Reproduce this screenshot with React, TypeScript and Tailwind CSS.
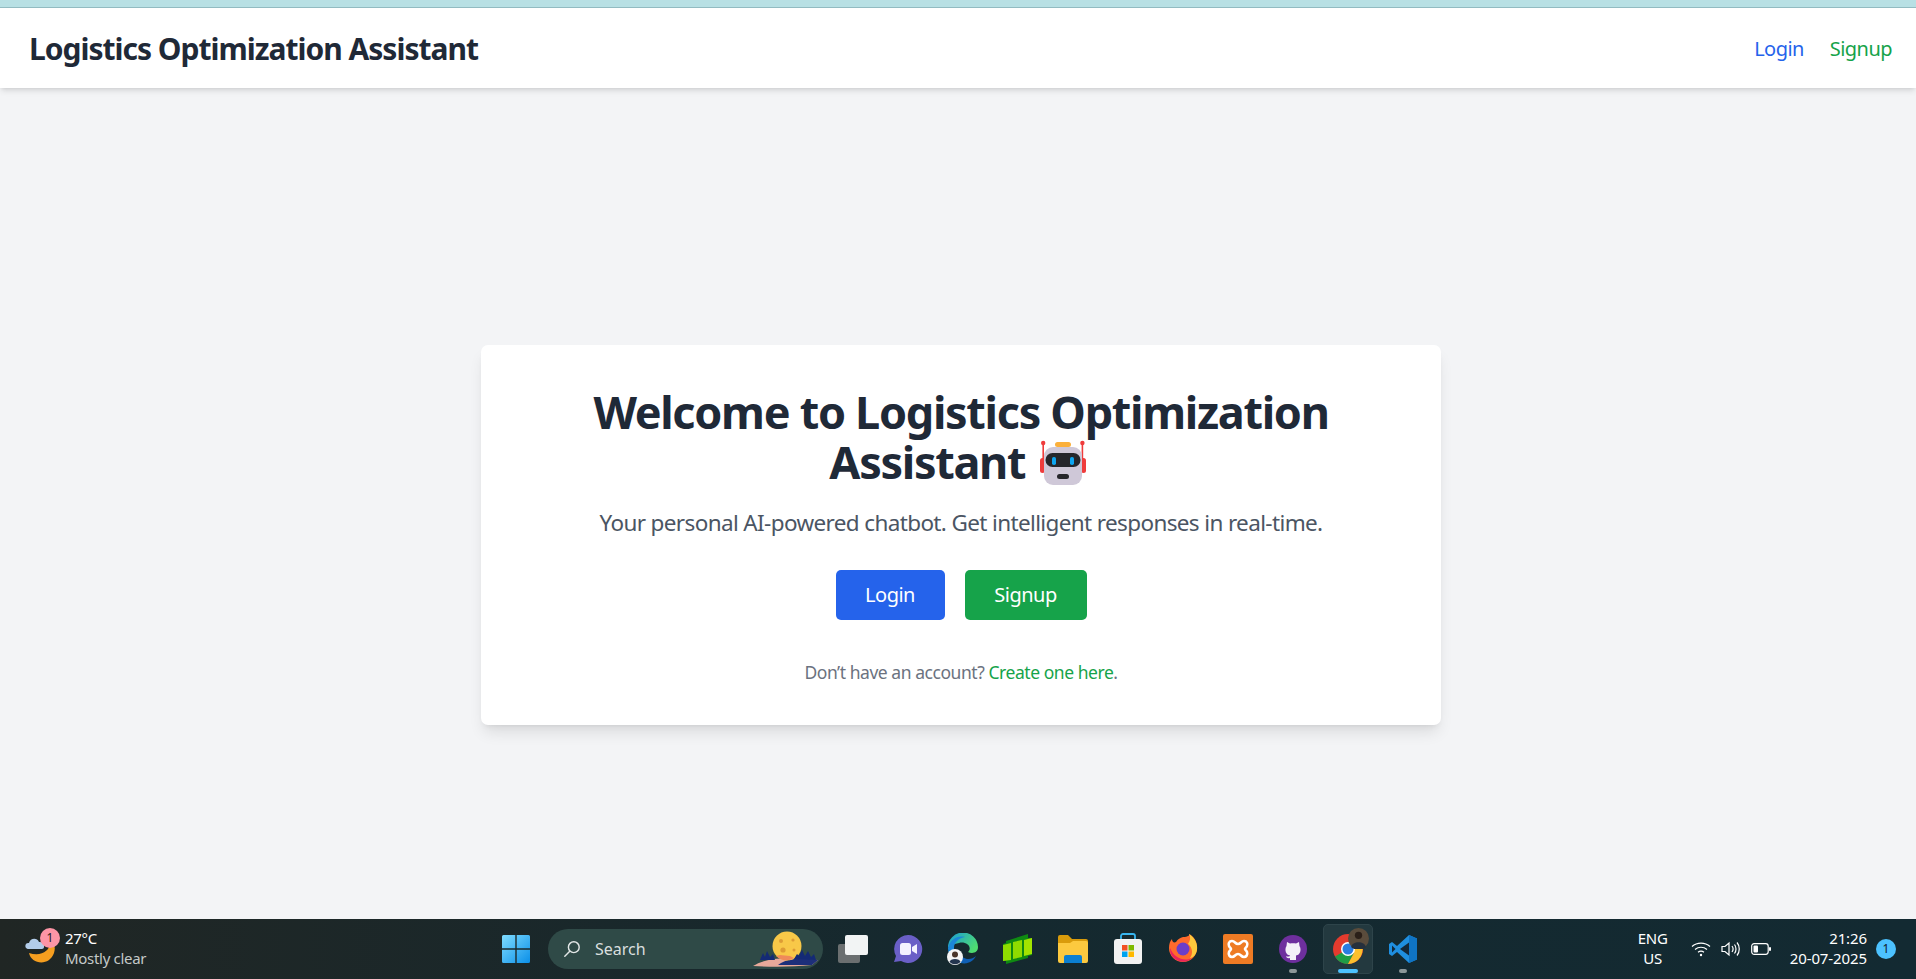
import React from "react";

const FONT = "font-['Noto_Sans','Open_Sans',sans-serif]";

function RobotEmoji() {
  return (
    <svg viewBox="0 0 52 48" className="inline-block w-[52px] h-[48px] align-[2.5px] -my-[10px] mr-[5px]">
      <rect x="19" y="3" width="16" height="5" rx="2.5" fill="#fbb03b" />
      <rect x="6.4" y="4" width="1.6" height="18" fill="#ef3c3c" />
      <rect x="45.6" y="4" width="1.6" height="18" fill="#ef3c3c" />
      <circle cx="7.2" cy="4" r="2.2" fill="#ef3c3c" />
      <circle cx="46.4" cy="4" r="2.2" fill="#ef3c3c" />
      <rect x="4" y="19" width="5" height="15" rx="2.5" fill="#ef3c3c" />
      <rect x="45" y="19" width="5" height="15" rx="2.5" fill="#ef3c3c" />
      <rect x="8" y="8" width="38" height="38" rx="9" fill="#cfc8d8" />
      <rect x="9.5" y="14" width="35" height="14" rx="7" fill="#26262b" />
      <rect x="16" y="18" width="4" height="8" rx="1.8" fill="#0ea5f0" />
      <rect x="34" y="18" width="4" height="8" rx="1.8" fill="#0ea5f0" />
      <rect x="21" y="35" width="12" height="5" rx="2.5" fill="#26262b" />
    </svg>
  );
}

function WeatherIcon() {
  return (
    <svg viewBox="0 0 34 34" className="w-[34px] h-[34px]">
      <path d="M26 9 C27 19 17 25 5 21 C7 32 25 35 30 21 C32 15 30 11 26 9 Z" fill="#f59e1f" />
      <path d="M5 17 C2 17 1 15 1.500 13 C2 11 4 11 5 11 C6 6 13 5 15 10 C18 10 21 12 20 15 C20 16 19 17 18 17 Z" fill="#b3cdea" />
    </svg>
  );
}

function WindowsIcon() {
  return (
    <svg viewBox="0 0 30 30" className="w-[30px] h-[30px]">
      <defs>
        <linearGradient id="win" x1="0" y1="0" x2="1" y2="1">
          <stop offset="0" stopColor="#7fdcff" />
          <stop offset="1" stopColor="#0a8fe8" />
        </linearGradient>
      </defs>
      <path d="M1 2.500 A1.500 1.500 0 0 1 2.500 1 H14.300 V14.300 H1 Z M15.700 1 H27.500 A1.500 1.500 0 0 1 29 2.500 V14.300 H15.700 Z M1 15.700 H14.300 V29 H2.500 A1.500 1.500 0 0 1 1 27.500 Z M15.700 15.700 H29 V27.500 A1.500 1.500 0 0 1 27.500 29 H15.700 Z" fill="url(#win)" />
    </svg>
  );
}

function SearchArt() {
  return (
    <svg viewBox="0 0 66 40" className="w-[66px] h-[40px] absolute right-[5px] top-0">
      <path d="M1 37 C12 30 30 28 46 30 L66 31 L60 36 C40 38 20 38 1 37 Z" fill="#e8a99a" />
      <path d="M26 36 C34 29 50 28 66 31 L60 36 Z" fill="#1d2f7a" />
      <path d="M8 31 L11 24 L13 28 L15 22 L18 28 L21 25 L23 31 Z" fill="#142a75" />
      <circle cx="35" cy="17" r="14.500" fill="#f8c848" />
      <path d="M42 30 L45 25 L47 27 L50 21 L53 27 L56 22 L59 28 L62 25 L64 31 Z" fill="#142a75" />
      <circle cx="29" cy="12" r="2" fill="#dd9c35" />
      <circle cx="41" cy="11" r="1.600" fill="#dd9c35" />
      <circle cx="31" cy="21" r="2.600" fill="#dd9c35" />
      <circle cx="42" cy="21" r="1.500" fill="#dd9c35" />
      <path d="M24 27 A14.500 14.500 0 0 0 42 29 L38 27 L28 26 Z" fill="#ef8a5a" />
    </svg>
  );
}

function TaskViewIcon() {
  return (
    <svg viewBox="0 0 30 28" className="w-[30px] h-[28px]">
      <rect x="0" y="9" width="22" height="19" rx="2" fill="#6b6f70" />
      <rect x="7" y="0" width="23" height="20" rx="2" fill="#f2f4f4" />
    </svg>
  );
}

function MeetIcon() {
  return (
    <svg viewBox="0 0 30 30" className="w-[30px] h-[30px]">
      <path d="M15 1 A14 14 0 1 1 8 27 L1 28 L3 22 A14 14 0 0 1 15 1 Z" fill="#6a5fc7" />
      <rect x="7" y="9" width="11" height="12" rx="2.500" fill="#f4f2ff" />
      <path d="M19 13 L24 10 V20 L19 17 Z" fill="#f4f2ff" />
    </svg>
  );
}

function EdgeIcon() {
  return (
    <svg viewBox="0 0 32 32" className="w-[32px] h-[32px]">
      <defs>
        <linearGradient id="edge" x1="0" y1="0" x2="1" y2="0.600">
          <stop offset="0" stopColor="#1a9ad8" />
          <stop offset="1" stopColor="#4fdc70" />
        </linearGradient>
      </defs>
      <path d="M1 15 A15 15 0 0 1 31 14 C31 20 25 21 21 19 C26 14 19 8 12 10 C6 11 2 13 1 15 Z" fill="url(#edge)" />
      <path d="M1 15 C3 7 10 2 18 4 C12 5 7 9 7 15 C7 22 12 30 19 30 A15 15 0 0 1 1 15 Z" fill="#1b87d8" />
      <path d="M13 19 C14 27 24 28 29 23 C26 29 20 31 16 30 C11 29 9 24 13 19 Z" fill="#0f5fb5" />
      <circle cx="8" cy="24" r="8" fill="#f4f4f4" />
      <circle cx="8" cy="21.500" r="3" fill="#4a3428" />
      <path d="M2.500 29 C3 25 13 25 13.500 29 A8 8 0 0 1 2.500 29 Z" fill="#23354f" />
    </svg>
  );
}

function GreenIcon() {
  return (
    <svg viewBox="0 0 32 32" className="w-[32px] h-[32px]">
      <path d="M4 8 L26 1 V5 L30 5 V22 L26 23 V25 L4 31 V28 L1 28 V11 L4 10 Z" fill="#0f8a12" />
      <path d="M1 12 L9 10 V27 L1 28 Z" fill="#8fdc00" />
      <path d="M11 9 L20 7 V24 L11 26 Z" fill="#8fdc00" />
      <path d="M22 7 L30 5 V21 L22 23 Z" fill="#a2e400" />
    </svg>
  );
}

function FolderIcon() {
  return (
    <svg viewBox="0 0 32 30" className="w-[32px] h-[30px]">
      <path d="M1 3 A2 2 0 0 1 3 1 H11 L15 5 H29 A2 2 0 0 1 31 7 V12 H1 Z" fill="#d99b0b" />
      <path d="M1 9 H13 L16 7 H29 A2 2 0 0 1 31 9 V27 A2 2 0 0 1 29 29 H3 A2 2 0 0 1 1 27 Z" fill="#fcc93f" />
      <path d="M7 29 V23 A2 2 0 0 1 9 21 H23 A2 2 0 0 1 25 23 V29 Z" fill="#0b7fd1" />
    </svg>
  );
}

function StoreIcon() {
  return (
    <svg viewBox="0 0 30 32" className="w-[30px] h-[32px]">
      <path d="M8 7 V3 A2 2 0 0 1 10 1 H20 A2 2 0 0 1 22 3 V7" fill="none" stroke="#38b6f0" strokeWidth="1.800" />
      <rect x="1" y="6" width="28" height="25" rx="3" fill="#f2f2f2" />
      <rect x="9" y="12" width="5.500" height="5.500" fill="#f25022" />
      <rect x="15.500" y="12" width="5.500" height="5.500" fill="#7fba00" />
      <rect x="9" y="18.500" width="5.500" height="5.500" fill="#00a4ef" />
      <rect x="15.500" y="18.500" width="5.500" height="5.500" fill="#ffb900" />
    </svg>
  );
}

function FirefoxIcon() {
  return (
    <svg viewBox="0 0 30 30" className="w-[30px] h-[30px]">
      <path d="M15 3 C20 3 22 1 21 0 C25 2 29 6 29 14 A14 14 0 1 1 1 14 C1 10 2 7 4 5 C4 8 6 9 8 8 C10 5 12 4 15 3 Z" fill="#ff6a2b" />
      <path d="M21 0 C27 4 30 10 29 16 C28 22 24 24 22 24 C25 20 25 14 20 10 C22 7 23 4 21 0 Z" fill="#ffc93c" />
      <path d="M2 14 A13 13 0 0 0 24 24 C16 28 6 24 2 14 Z" fill="#e9245c" />
      <circle cx="15" cy="15" r="6.500" fill="#6b3ec9" />
    </svg>
  );
}

function XamppIcon() {
  return (
    <svg viewBox="0 0 30 30" className="w-[30px] h-[30px]">
      <rect width="30" height="30" rx="2" fill="#ee7b24" />
      <path d="M9 7 C6 7 5 10 6 12 C7 14 8 14 8 15 C8 16 7 16 6 18 C5 21 7 23 9 23 C12 23 12 20 15 20 C18 20 18 23 21 23 C23 23 25 21 24 18 C23 16 22 16 22 15 C22 14 23 14 24 12 C25 10 24 7 21 7 C18 7 18 10 15 10 C12 10 12 7 9 7 Z" fill="none" stroke="#fff" strokeWidth="2.600" />
    </svg>
  );
}

function GithubIcon() {
  return (
    <svg viewBox="0 0 28 28" className="w-[28px] h-[28px]">
      <circle cx="14" cy="14" r="14" fill="#6e2f9e" />
      <path d="M8 7 L11 8.500 C13 8 15 8 17 8.500 L20 7 L20.500 11 C22 13 22 17 20 19 C19 20 18 20.300 17 20.500 V25 H11 V23 C9 23.500 7.500 23 7 21 C8 21.500 9 22 11 21 V20.500 C10 20.300 9 20 8 19 C6 17 6 13 7.500 11 Z" fill="#f4f0f8" />
    </svg>
  );
}

function ChromeIcon() {
  return (
    <svg viewBox="0 0 32 32" className="w-[32px] h-[32px]">
      <circle cx="16" cy="16" r="15" fill="#e33b2e" />
      <path d="M16 16 L3 23.500 A15 15 0 0 0 16 31 L22 20 Z" fill="#1f9d45" />
      <path d="M16 9 H29 A15 15 0 0 1 16 31 L22 20 Z" fill="#fbc02d" />
      <circle cx="16" cy="16" r="7" fill="#fff" />
      <circle cx="16" cy="16" r="5.500" fill="#2a7de1" />
    </svg>
  );
}

function AvatarBadge() {
  return (
    <svg viewBox="0 0 20 20" className="absolute top-[3px] right-[3px] w-[21px] h-[21px]">
      <circle cx="10" cy="10" r="10" fill="#5a4c3c" />
      <circle cx="10" cy="7" r="3.500" fill="#2a1f18" />
      <path d="M3 18 C4 12 16 12 17 18 A10 10 0 0 1 3 18 Z" fill="#26303c" />
    </svg>
  );
}

function VscodeIcon() {
  return (
    <svg viewBox="0 0 30 30" className="w-[30px] h-[30px]">
      <path d="M21 1 L29 4.500 V25.500 L21 29 L9 18 L4 22 L1 20 V10 L4 8 L9 12 Z" fill="#1f8fe0" />
      <path d="M21 8.500 L12 15 L21 21.500 Z" fill="#14293a" />
      <path d="M4 11.500 L7.500 15 L4 18.500 Z" fill="#14293a" />
      <path d="M21 1 L29 4.500 V25.500 L21 29 Z" fill="#0f74c4" />
    </svg>
  );
}

function TrayIcons() {
  return (
    <div className="flex items-center gap-[10px]">
      <svg viewBox="0 0 20 16" className="w-[20px] h-[16px]" fill="none" stroke="#fff" strokeWidth="1.200">
        <path d="M1 5.500 C6 1 14 1 19 5.500" />
        <path d="M4 8.500 C7.500 5.500 12.500 5.500 16 8.500" />
        <path d="M7 11.200 C9 9.800 11 9.800 13 11.200" />
        <circle cx="10" cy="14" r="1.200" fill="#fff" stroke="none" />
      </svg>
      <svg viewBox="0 0 20 16" className="w-[20px] h-[16px]" fill="none" stroke="#fff" strokeWidth="1.200">
        <path d="M1 5.500 H4 L8 2 V14 L4 10.500 H1 Z" />
        <path d="M11 5 C12.500 7 12.500 9 11 11" />
        <path d="M13.500 3.500 C15.500 6 15.500 10 13.500 12.500" />
        <path d="M16 1.500 C19 5 19 11 16 14.500" />
      </svg>
      <svg viewBox="0 0 20 14" className="w-[20px] h-[14px]" fill="none" stroke="#fff" strokeWidth="1.200">
        <rect x="0.700" y="1.700" width="16.500" height="10.600" rx="2.500" />
        <rect x="2.500" y="3.500" width="4.500" height="7" rx="1" fill="#fff" stroke="none" />
        <rect x="18" y="5" width="2" height="4" rx="1" fill="#fff" stroke="none" />
      </svg>
    </div>
  );
}

function TaskItem({ active, dot, children }: { active?: boolean; dot?: boolean; children: React.ReactNode }) {
  return (
    <div
      className={`relative w-[50px] h-[50px] flex items-center justify-center rounded-[5px] ${
        active ? "bg-[#23393f] border border-[#2e444a]" : ""
      }`}
    >
      {children}
      {dot && <span className="absolute bottom-[1px] left-[21px] w-[8px] h-[4px] rounded-full bg-[#8c9698]" />}
      {active && <span className="absolute bottom-0 left-[14px] w-[20px] h-[4px] rounded-full bg-[#4cc2ff]" />}
    </div>
  );
}

export default function App() {
  return (
    <div className={`w-[1916px] h-[979px] overflow-hidden flex flex-col bg-[#f3f4f6] ${FONT}`}>
      <div className="h-[8px] shrink-0 bg-[#b8e0e4] border-b border-[#93bcc2]" />

      <nav className="h-[80px] shrink-0 bg-white shadow-md flex items-center justify-between pl-[29px] pr-[24px] pt-[2px]">
        <h1 className="text-[30px] leading-[40px] font-bold text-[#1f2937] tracking-[-1px]">Logistics Optimization Assistant</h1>
        <div className="flex items-center gap-[26px] text-[20px] tracking-[-0.55px]">
          <a className="text-[#2563eb]">Login</a>
          <a className="text-[#16a34a]">Signup</a>
        </div>
      </nav>

      <main className="flex-1 flex justify-center pt-[257px] pl-[6px]">
        <div className="w-[960px] h-[380px] bg-white rounded-[7px] shadow-lg p-[40px] text-center">
          <h2 className="text-[45px] leading-[50px] font-bold text-[#1f2937] mb-[18px] pt-[2px] px-[60px] tracking-[-1.3px]">
            Welcome to Logistics Optimization Assistant <RobotEmoji />
          </h2>
          <p className="text-[22.5px] leading-[35px] text-[#4b5563] mb-[30px] tracking-[-0.63px]">
            Your personal AI-powered chatbot. Get intelligent responses in real-time.
          </p>
          <div className="flex justify-center gap-[20px]">
            <a className="w-[109px] h-[50px] rounded-[5px] bg-[#2563eb] text-white text-[20px] flex items-center justify-center tracking-[-0.5px]">Login</a>
            <a className="w-[122px] h-[50px] rounded-[5px] bg-[#16a34a] text-white text-[20px] flex items-center justify-center tracking-[-0.5px]">Signup</a>
          </div>
          <p className="mt-[40px] text-[17.5px] leading-[25px] text-[#6b7280] tracking-[-0.45px]">
            Don’t have an account? <a className="text-[#16a34a]">Create one here</a>.
          </p>
        </div>
      </main>

      <footer className="h-[60px] shrink-0 bg-gradient-to-r from-[#202624] via-[#15292f] to-[#132a32] flex items-center font-['Noto_Sans',sans-serif] text-white">
        <div className="w-[491px] shrink-0 flex items-center pl-[24px] gap-[7px]">
          <div className="relative w-[34px] h-[34px]">
            <WeatherIcon />
            <span className="absolute -top-[4px] left-[16px] w-[20px] h-[20px] rounded-full bg-[#fd95a6] text-[#1c1c1c] text-[12px] flex items-center justify-center">1</span>
          </div>
          <div className="text-[15px] leading-[20px] tracking-[-0.3px] pb-[2px]">
            <div>27°C</div>
            <div className="text-[#c4c9c8]">Mostly clear</div>
          </div>
        </div>

        <div className="flex items-center gap-[5px]">
          <TaskItem><WindowsIcon /></TaskItem>
          <div className="relative w-[275px] h-[40px] ml-[2px] rounded-full bg-[#2f4a47] flex items-center pl-[15px] gap-[14px] text-[16px] text-[#d9dfde]">
            <svg viewBox="0 0 20 20" className="w-[18px] h-[18px]" fill="none" stroke="#e2e6e6" strokeWidth="1.600">
              <circle cx="12" cy="8" r="6" />
              <path d="M7.500 12.500 L2 18" strokeLinecap="round" />
            </svg>
            <span>Search</span>
            <SearchArt />
          </div>
          <TaskItem><TaskViewIcon /></TaskItem>
          <TaskItem><MeetIcon /></TaskItem>
          <TaskItem><EdgeIcon /></TaskItem>
          <TaskItem><GreenIcon /></TaskItem>
          <TaskItem><FolderIcon /></TaskItem>
          <TaskItem><StoreIcon /></TaskItem>
          <TaskItem><FirefoxIcon /></TaskItem>
          <TaskItem><XamppIcon /></TaskItem>
          <TaskItem dot><GithubIcon /></TaskItem>
          <TaskItem active>
            <ChromeIcon />
            <AvatarBadge />
          </TaskItem>
          <TaskItem dot><VscodeIcon /></TaskItem>
        </div>

        <div className="flex-1 flex items-center justify-end pr-[20px]">
          <div className="text-[15px] leading-[20px] text-center mr-[23px] tracking-[-0.2px] pb-[2px]">
            <div>ENG</div>
            <div>US</div>
          </div>
          <TrayIcons />
          <div className="text-[15px] leading-[20px] text-right ml-[19px] mr-[9px] tracking-[-0.1px] pb-[2px]">
            <div>21:26</div>
            <div>20-07-2025</div>
          </div>
          <span className="w-[20px] h-[20px] rounded-full bg-[#4cc2ff] text-[#102028] text-[12px] flex items-center justify-center">1</span>
        </div>
      </footer>
    </div>
  );
}
